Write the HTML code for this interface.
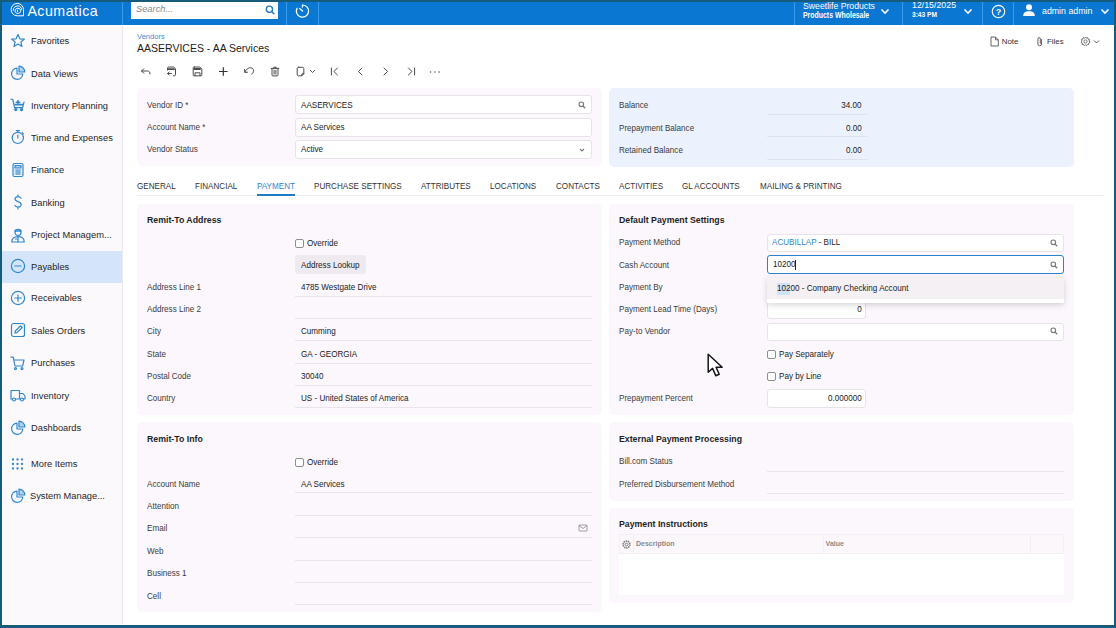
<!DOCTYPE html><html><head><meta charset="utf-8"><style>
html,body{margin:0;padding:0;width:1116px;height:628px;overflow:hidden;background:#fff}
body{position:relative;font-family:"Liberation Sans",sans-serif}
.t{position:absolute;white-space:nowrap}
.r{position:absolute;box-sizing:border-box}
svg.r{overflow:visible}
</style></head><body>
<div class="r" style="left:0px;top:0px;width:1116px;height:628px;background:#ffffff;"></div>
<div class="r" style="left:0px;top:2px;width:1116px;height:23px;background:#0a77d3;"></div>
<svg class="r" style="left:10px;top:2px;" width="15" height="16" viewBox="0 0 15 16"><g fill="none" stroke="#fff" stroke-width="1"><path d="M7.3 13.8 A6.2 6.2 0 1 1 13.5 7.6 L13.5 13.8 Z"/><path d="M3.2 8.8 C3.2 5.6 5.3 3.9 7.8 3.9 C10.3 3.9 11.6 5.8 11.6 7.8"/><path d="M5 9 C5 7.3 6.2 6.2 7.9 6.2 C9.5 6.2 10.7 7.3 10.7 8.8 C10.7 10.4 9.4 11.4 7.8 11.4 C6.4 11.4 5 10.6 5 9 Z"/><path d="M7.4 7.6 L7.6 10"/></g></svg>
<div class="t" style="left:27.4px;top:3.68px;font-size:14.2px;line-height:14.2px;color:#ffffff;font-weight:400;letter-spacing:0.5px;">Acumatica</div>
<div class="r" style="left:122px;top:2px;width:1px;height:23px;background:#3c9bef;"></div>
<div class="r" style="left:131px;top:2px;width:147px;height:17px;background:#ffffff;"></div>
<div class="t" style="left:136px;top:5.43px;font-size:9.3px;line-height:9.3px;color:#8a8a8a;font-weight:400;font-style:italic;">Search...</div>
<svg class="r" style="left:265px;top:5px;" width="11" height="11" viewBox="0 0 11 11"><g fill="none" stroke="#1f77c4" stroke-width="1.35"><circle cx="4.4" cy="4.2" r="3.1"/><path d="M6.6 6.4 L9.4 9.2"/></g></svg>
<div class="r" style="left:286px;top:2px;width:1px;height:23px;background:#3c9bef;"></div>
<svg class="r" style="left:294px;top:3px;" width="16" height="16" viewBox="0 0 16 16"><g fill="none" stroke="#fff" stroke-width="1.25" stroke-linecap="round"><path d="M3 5.4 A6.1 6.1 0 1 0 8.6 2 L8.4 4"/><path d="M5.6 5.4 L8.6 8"/></g></svg>
<div class="r" style="left:318px;top:2px;width:1px;height:23px;background:#3c9bef;"></div>
<div class="r" style="left:794px;top:2px;width:1px;height:23px;background:#3c9bef;"></div>
<div class="t" style="left:803px;top:1.84px;font-size:8.7px;line-height:8.7px;color:#ffffff;font-weight:400;">Sweetlife Products</div>
<div class="t" style="left:803px;top:11.27px;font-size:8.3px;line-height:8.3px;color:#ffffff;font-weight:700;transform:scaleX(0.835);transform-origin:left center;">Products Wholesale</div>
<svg class="r" style="left:880px;top:8px;" width="10" height="7" viewBox="0 0 10 7"><path d="M1.5 1.5 L5 5 L8.5 1.5" fill="none" stroke="#fff" stroke-width="1.6"/></svg>
<div class="r" style="left:902px;top:2px;width:1px;height:23px;background:#3c9bef;"></div>
<div class="t" style="left:912px;top:1.25px;font-size:8.8px;line-height:8.8px;color:#ffffff;font-weight:400;">12/15/2025</div>
<div class="t" style="left:912px;top:11.37px;font-size:7.6px;line-height:7.6px;color:#ffffff;font-weight:700;transform:scaleX(0.87);transform-origin:left center;">3:43 PM</div>
<svg class="r" style="left:963px;top:8px;" width="10" height="7" viewBox="0 0 10 7"><path d="M1.5 1.5 L5 5 L8.5 1.5" fill="none" stroke="#fff" stroke-width="1.6"/></svg>
<div class="r" style="left:982px;top:2px;width:1px;height:23px;background:#3c9bef;"></div>
<svg class="r" style="left:991px;top:4px;" width="15" height="15" viewBox="0 0 15 15"><circle cx="7.5" cy="7.5" r="6.2" fill="none" stroke="#fff" stroke-width="1.2"/><text x="7.5" y="10.8" text-anchor="middle" font-family="Liberation Sans" font-size="9" font-weight="700" fill="#fff">?</text></svg>
<div class="r" style="left:1013px;top:2px;width:1px;height:23px;background:#3c9bef;"></div>
<svg class="r" style="left:1022px;top:3px;" width="14" height="14" viewBox="0 0 14 14"><circle cx="7" cy="4.2" r="3" fill="#fff"/><path d="M1.2 13 C1.2 9.5 3.5 8.3 7 8.3 C10.5 8.3 12.8 9.5 12.8 13 Z" fill="#fff"/></svg>
<div class="t" style="left:1042px;top:6.55px;font-size:8.8px;line-height:8.8px;color:#ffffff;font-weight:400;">admin admin</div>
<svg class="r" style="left:1100px;top:8px;" width="10" height="7" viewBox="0 0 10 7"><path d="M1.5 1.5 L5 5 L8.5 1.5" fill="none" stroke="#fff" stroke-width="1.6"/></svg>
<div class="r" style="left:2px;top:25px;width:120px;height:599px;background:#fcf9fd;"></div>
<div class="r" style="left:122px;top:25px;width:1px;height:599px;background:#ece8ef;"></div>
<div class="r" style="left:2px;top:251px;width:120px;height:32px;background:#d4e5fa;"></div>
<div class="t" style="left:31px;top:36.29px;font-size:9.7px;line-height:9.7px;color:#262626;font-weight:400;transform:scaleX(0.96);transform-origin:left center;">Favorites</div>
<div class="t" style="left:31px;top:68.59px;font-size:9.7px;line-height:9.7px;color:#262626;font-weight:400;transform:scaleX(0.96);transform-origin:left center;">Data Views</div>
<div class="t" style="left:31px;top:100.69px;font-size:9.7px;line-height:9.7px;color:#262626;font-weight:400;transform:scaleX(0.96);transform-origin:left center;">Inventory Planning</div>
<div class="t" style="left:31px;top:132.69px;font-size:9.7px;line-height:9.7px;color:#262626;font-weight:400;transform:scaleX(0.96);transform-origin:left center;">Time and Expenses</div>
<div class="t" style="left:31px;top:165.29px;font-size:9.7px;line-height:9.7px;color:#262626;font-weight:400;transform:scaleX(0.96);transform-origin:left center;">Finance</div>
<div class="t" style="left:31px;top:197.59px;font-size:9.7px;line-height:9.7px;color:#262626;font-weight:400;transform:scaleX(0.96);transform-origin:left center;">Banking</div>
<div class="t" style="left:31px;top:229.99px;font-size:9.7px;line-height:9.7px;color:#262626;font-weight:400;transform:scaleX(0.96);transform-origin:left center;">Project Managem...</div>
<div class="t" style="left:31px;top:261.69px;font-size:9.7px;line-height:9.7px;color:#262626;font-weight:400;transform:scaleX(0.96);transform-origin:left center;">Payables</div>
<div class="t" style="left:31px;top:293.49px;font-size:9.7px;line-height:9.7px;color:#262626;font-weight:400;transform:scaleX(0.96);transform-origin:left center;">Receivables</div>
<div class="t" style="left:31px;top:325.79px;font-size:9.7px;line-height:9.7px;color:#262626;font-weight:400;transform:scaleX(0.96);transform-origin:left center;">Sales Orders</div>
<div class="t" style="left:31px;top:358.09px;font-size:9.7px;line-height:9.7px;color:#262626;font-weight:400;transform:scaleX(0.96);transform-origin:left center;">Purchases</div>
<div class="t" style="left:31px;top:390.69px;font-size:9.7px;line-height:9.7px;color:#262626;font-weight:400;transform:scaleX(0.96);transform-origin:left center;">Inventory</div>
<div class="t" style="left:31px;top:423.39px;font-size:9.7px;line-height:9.7px;color:#262626;font-weight:400;transform:scaleX(0.96);transform-origin:left center;">Dashboards</div>
<div class="t" style="left:31px;top:458.89px;font-size:9.7px;line-height:9.7px;color:#262626;font-weight:400;transform:scaleX(0.96);transform-origin:left center;">More Items</div>
<div class="t" style="left:30px;top:491.29px;font-size:9.7px;line-height:9.7px;color:#262626;font-weight:400;transform:scaleX(0.96);transform-origin:left center;">System Manage...</div>
<svg class="r" style="left:10px;top:33px;" width="16" height="16" viewBox="0 0 16 16"><path fill="none" stroke="#2f88cf" stroke-width="1.2" stroke-linejoin="round" stroke-linecap="round" d="M8 1.5 L9.9 5.8 L14.4 6.1 L10.9 9 L12 13.6 L8 11.1 L4 13.6 L5.1 9 L1.6 6.1 L6.1 5.8 Z"/></svg>
<svg class="r" style="left:10px;top:65px;" width="16" height="16" viewBox="0 0 16 16"><g fill="none" stroke="#2f88cf" stroke-width="1.2" stroke-linejoin="round" stroke-linecap="round"><path d="M7 3.2 A5.6 5.6 0 1 0 12.8 9 L7 9 Z"/><path d="M9 1.2 L9 7 L14.8 7 A5.8 5.8 0 0 0 9 1.2 Z" fill="#2f88cf" fill-opacity="0.35"/></g></svg>
<svg class="r" style="left:10px;top:98px;" width="16" height="16" viewBox="0 0 16 16"><g fill="none" stroke="#2f88cf" stroke-width="1.2" stroke-linejoin="round" stroke-linecap="round"><path d="M1 1.2 L2.8 1.5 L4.6 9.6 L12.6 9.6 L14 4.2"/><path d="M5 6.6 H12.8" stroke-width="1.6"/><circle cx="5.8" cy="11.6" r="1.1" fill="#2f88cf"/><circle cx="11.6" cy="11.6" r="1.1" fill="#2f88cf"/><path d="M8 2.4 V6 M6.2 4.2 H9.8" stroke-width="1.5"/></g></svg>
<svg class="r" style="left:10px;top:129px;" width="16" height="16" viewBox="0 0 16 16"><g fill="none" stroke="#2f88cf" stroke-width="1.2" stroke-linejoin="round" stroke-linecap="round"><circle cx="7.8" cy="8.9" r="5.6"/><path d="M6.2 1.6 H9.4 M7.8 1.6 V3.3 M7.8 6 V9 M12.2 3.6 L13.4 4.8"/></g></svg>
<svg class="r" style="left:10px;top:162px;" width="16" height="16" viewBox="0 0 16 16"><g fill="none" stroke="#2f88cf" stroke-width="1.2" stroke-linejoin="round" stroke-linecap="round"><rect x="3" y="1.5" width="10" height="13" rx="1.5"/><rect x="5" y="3.5" width="6" height="2.5" fill="#2f88cf" fill-opacity="0.4"/><path d="M5 8 H11 M5 10 H11 M5 12 H11 M7 8 V12.5 M9 8 V12.5" stroke-width="0.8"/></g></svg>
<svg class="r" style="left:10px;top:194px;" width="16" height="16" viewBox="0 0 16 16"><path fill="none" stroke="#2f88cf" stroke-width="1.2" stroke-linejoin="round" stroke-linecap="round" stroke-width="1.4" d="M11 4.2 C10.3 3 9.3 2.6 8 2.6 C6.2 2.6 5 3.5 5 5 C5 8.2 11.2 7 11.2 10.6 C11.2 12.2 9.9 13.1 8 13.1 C6.5 13.1 5.4 12.5 4.8 11.3 M8 0.8 V2.6 M8 13.1 V15"/></svg>
<svg class="r" style="left:10px;top:227px;" width="16" height="16" viewBox="0 0 16 16"><g fill="none" stroke="#2f88cf" stroke-width="1.2" stroke-linejoin="round" stroke-linecap="round"><circle cx="8" cy="5.5" r="3"/><path d="M4.8 4.2 C5 1.6 11 1.6 11.2 4.2 Z" fill="#2f88cf" fill-opacity="0.4"/><path d="M1.8 15 C1.8 11 4.5 9.6 8 9.6 C11.5 9.6 14.2 11 14.2 15 Z"/><path d="M8 9.6 V15 M5.5 12 H7"/></g></svg>
<svg class="r" style="left:10px;top:258px;" width="16" height="16" viewBox="0 0 16 16"><g fill="none" stroke="#2f88cf" stroke-width="1.2" stroke-linejoin="round" stroke-linecap="round"><circle cx="8" cy="8" r="6.6"/><path d="M4.8 8 H11.2"/></g></svg>
<svg class="r" style="left:10px;top:290px;" width="16" height="16" viewBox="0 0 16 16"><g fill="none" stroke="#2f88cf" stroke-width="1.2" stroke-linejoin="round" stroke-linecap="round"><circle cx="8" cy="8" r="6.6"/><path d="M4.8 8 H11.2 M8 4.8 V11.2"/></g></svg>
<svg class="r" style="left:10px;top:322px;" width="16" height="16" viewBox="0 0 16 16"><g fill="none" stroke="#2f88cf" stroke-width="1.2" stroke-linejoin="round" stroke-linecap="round"><rect x="1.5" y="1.5" width="13" height="13" rx="2"/><path d="M5 11 L5.3 9 L10.5 3.8 L12.2 5.5 L7 10.7 Z"/></g></svg>
<svg class="r" style="left:10px;top:355px;" width="16" height="16" viewBox="0 0 16 16"><g fill="none" stroke="#2f88cf" stroke-width="1.2" stroke-linejoin="round" stroke-linecap="round" stroke-width="1.3"><path d="M1 2.2 L3.2 2.2 L5 11 L12.6 11 L14 5 L4 5"/><circle cx="5.5" cy="13.6" r="1"/><circle cx="12" cy="13.6" r="1"/></g></svg>
<svg class="r" style="left:10px;top:387px;" width="16" height="16" viewBox="0 0 16 16"><g fill="none" stroke="#2f88cf" stroke-width="1.2" stroke-linejoin="round" stroke-linecap="round" stroke-width="1.2"><path d="M1 3.5 H9.5 V12 H1 Z M9.5 6.5 H13 L15 9 V12 H9.5"/><circle cx="4" cy="12.5" r="1.5" fill="#fcf9fd"/><circle cx="12" cy="12.5" r="1.5" fill="#fcf9fd"/></g></svg>
<svg class="r" style="left:10px;top:420px;" width="16" height="16" viewBox="0 0 16 16"><g fill="none" stroke="#2f88cf" stroke-width="1.2" stroke-linejoin="round" stroke-linecap="round"><path d="M7 3.2 A5.6 5.6 0 1 0 12.8 9 L7 9 Z"/><path d="M9 1.2 L9 7 L14.8 7 A5.8 5.8 0 0 0 9 1.2 Z" fill="#2f88cf" fill-opacity="0.35"/></g></svg>
<svg class="r" style="left:10px;top:456px;" width="16" height="16" viewBox="0 0 16 16"><circle cx="3.0" cy="3.5" r="1.15" fill="#2f88cf"/><circle cx="3.0" cy="8.0" r="1.15" fill="#2f88cf"/><circle cx="3.0" cy="12.5" r="1.15" fill="#2f88cf"/><circle cx="7.5" cy="3.5" r="1.15" fill="#2f88cf"/><circle cx="7.5" cy="8.0" r="1.15" fill="#2f88cf"/><circle cx="7.5" cy="12.5" r="1.15" fill="#2f88cf"/><circle cx="12.0" cy="3.5" r="1.15" fill="#2f88cf"/><circle cx="12.0" cy="8.0" r="1.15" fill="#2f88cf"/><circle cx="12.0" cy="12.5" r="1.15" fill="#2f88cf"/></svg>
<svg class="r" style="left:10px;top:488px;" width="16" height="16" viewBox="0 0 16 16"><g fill="none" stroke="#2f88cf" stroke-width="1.2" stroke-linejoin="round" stroke-linecap="round"><path d="M7 3.2 A5.6 5.6 0 1 0 12.8 9 L7 9 Z"/><path d="M9 1.2 L9 7 L14.8 7 A5.8 5.8 0 0 0 9 1.2 Z" fill="#2f88cf" fill-opacity="0.35"/></g></svg>
<div class="t" style="left:137px;top:32.87px;font-size:7.6px;line-height:7.6px;color:#3f8fd2;font-weight:400;">Vendors</div>
<div class="t" style="left:137px;top:43.11px;font-size:10.5px;line-height:10.5px;color:#222222;font-weight:400;">AASERVICES - AA Services</div>
<svg class="r" style="left:989px;top:36px;" width="11" height="11" viewBox="0 0 11 11"><path d="M2 1 L6.5 1 L9.3 3.8 L9.3 10 L2 10 Z M6.5 1 L6.5 3.8 L9.3 3.8" fill="none" stroke="#555" stroke-width="0.9" stroke-linejoin="round"/></svg>
<div class="t" style="left:1001.7px;top:37.81px;font-size:7.9px;line-height:7.9px;color:#333;font-weight:400;">Note</div>
<svg class="r" style="left:1035px;top:36px;" width="10" height="11" viewBox="0 0 10 11"><path d="M6.5 3.5 L6.5 8 A1.8 1.8 0 0 1 2.9 8 L2.9 2.8 A1.2 1.2 0 0 1 5.3 2.8 L5.3 7.5" fill="none" stroke="#555" stroke-width="0.9" stroke-linecap="round"/></svg>
<div class="t" style="left:1047px;top:37.81px;font-size:7.9px;line-height:7.9px;color:#333;font-weight:400;">Files</div>
<svg class="r" style="left:1080px;top:36px;" width="11" height="11" viewBox="0 0 11 11"><g fill="none" stroke="#666" stroke-width="0.9"><circle cx="5.5" cy="5.5" r="1.6"/><path d="M5.5 1 L6.4 2.2 L7.9 1.7 L8.1 3.2 L9.6 3.6 L9 5 L10 6.2 L8.7 7 L8.8 8.5 L7.3 8.5 L6.5 9.8 L5.5 8.9 L4.3 9.8 L3.6 8.5 L2.1 8.5 L2.3 7 L1 6.2 L2 5 L1.4 3.6 L2.9 3.2 L3.1 1.7 L4.6 2.2 Z" stroke-linejoin="round"/></g></svg>
<svg class="r" style="left:1093px;top:39px;" width="7" height="6" viewBox="0 0 7 6"><path d="M1 1.5 L3.5 4 L6 1.5" fill="none" stroke="#555" stroke-width="1"/></svg>
<svg class="r" style="left:140px;top:66px;" width="12" height="10" viewBox="0 0 12 10"><g fill="none" stroke="#4a4a4a" stroke-width="1" stroke-linecap="round" stroke-linejoin="round"><path d="M1.5 5 H7.5 C9.3 5 10 6 10 8"/><path d="M3.8 2.7 L1.5 5 L3.8 7.3"/></g></svg>
<svg class="r" style="left:166px;top:66px;" width="11" height="11" viewBox="0 0 11 11"><g fill="none" stroke="#4a4a4a" stroke-width="1" stroke-linecap="round" stroke-linejoin="round"><path d="M1.5 4 V2.2 C1.5 1.5 2 1 2.7 1 H7.8 L9.5 2.7 V8.8 C9.5 9.4 9 9.8 8.4 9.8 H7.5"/><path d="M2 3.2 H8" stroke-width="1.8"/><path d="M5.5 7.5 H1.6 M3.2 6 L1.6 7.5 L3.2 9"/></g></svg>
<svg class="r" style="left:192px;top:66px;" width="11" height="11" viewBox="0 0 11 11"><g fill="none" stroke="#4a4a4a" stroke-width="1" stroke-linecap="round" stroke-linejoin="round"><path d="M2.2 1 H7.8 L9.8 3 V8.8 C9.8 9.4 9.4 9.8 8.8 9.8 H2.2 C1.6 9.8 1.2 9.4 1.2 8.8 V2 C1.2 1.4 1.6 1 2.2 1 Z"/><path d="M2.4 3 H8" stroke-width="1.8"/><path d="M3 9.8 V6.8 H8 V9.8"/></g></svg>
<svg class="r" style="left:218px;top:66px;" width="11" height="11" viewBox="0 0 11 11"><path d="M5.3 1.2 V9.8 M1 5.5 H9.6" stroke="#333" stroke-width="1.2"/></svg>
<svg class="r" style="left:243px;top:66px;" width="12" height="10" viewBox="0 0 12 10"><g fill="none" stroke="#4a4a4a" stroke-width="1" stroke-linecap="round" stroke-linejoin="round"><path d="M2 6 C3.5 2.5 6 1.5 8 1.8 C10 2.2 10.8 3.8 10.6 5.4 C10.4 6.6 9.6 7.4 8.6 8"/><path d="M1.6 3.4 L1.8 6.4 L4.6 6.2"/></g></svg>
<svg class="r" style="left:270px;top:66px;" width="10" height="11" viewBox="0 0 10 11"><g fill="none" stroke="#4a4a4a" stroke-width="1" stroke-linecap="round" stroke-linejoin="round"><path d="M1.2 2.4 H8.8 M3.8 2.3 V1.2 H6.2 V2.3 M2 2.6 V8.9 C2 9.5 2.4 9.9 3 9.9 H7 C7.6 9.9 8 9.5 8 8.9 V2.6 M4.1 4.2 V8.1 M5.9 4.2 V8.1"/></g></svg>
<svg class="r" style="left:296px;top:66px;" width="9" height="11" viewBox="0 0 9 11"><g fill="none" stroke="#4a4a4a" stroke-width="1" stroke-linecap="round" stroke-linejoin="round"><path d="M2.4 1.3 H6.6 C7.3 1.3 7.8 1.8 7.8 2.5 V7.8 L5.8 9.8 H2.4 C1.7 9.8 1.2 9.3 1.2 8.6 V2.5 C1.2 1.8 1.7 1.3 2.4 1.3 Z"/><path d="M5.8 9.6 V8 C5.8 7.9 5.9 7.8 6 7.8 H7.8"/></g></svg>
<svg class="r" style="left:309px;top:69px;" width="7" height="5" viewBox="0 0 7 5"><path d="M1 1 L3.5 3.5 L6 1" fill="none" stroke="#555" stroke-width="1"/></svg>
<svg class="r" style="left:330px;top:67px;" width="9" height="9" viewBox="0 0 9 9"><g fill="none" stroke="#4a4a4a" stroke-width="1" stroke-linecap="round" stroke-linejoin="round" stroke-width="1.15"><path d="M1.4 1 V8 M7.4 1 L3.9 4.5 L7.4 8"/></g></svg>
<svg class="r" style="left:356px;top:67px;" width="8" height="9" viewBox="0 0 8 9"><g fill="none" stroke="#4a4a4a" stroke-width="1" stroke-linecap="round" stroke-linejoin="round" stroke-width="1.15"><path d="M6 1 L2.5 4.5 L6 8"/></g></svg>
<svg class="r" style="left:382px;top:67px;" width="8" height="9" viewBox="0 0 8 9"><g fill="none" stroke="#4a4a4a" stroke-width="1" stroke-linecap="round" stroke-linejoin="round" stroke-width="1.15"><path d="M2 1 L5.5 4.5 L2 8"/></g></svg>
<svg class="r" style="left:407px;top:67px;" width="9" height="9" viewBox="0 0 9 9"><g fill="none" stroke="#4a4a4a" stroke-width="1" stroke-linecap="round" stroke-linejoin="round" stroke-width="1.15"><path d="M1.4 1 L4.9 4.5 L1.4 8 M7.6 1 V8"/></g></svg>
<svg class="r" style="left:429px;top:70px;" width="12" height="4" viewBox="0 0 12 4"><circle cx="1.5" cy="2" r="0.8" fill="#555"/><circle cx="5.8" cy="2" r="0.8" fill="#555"/><circle cx="10.1" cy="2" r="0.8" fill="#555"/></svg>
<div class="r" style="left:137px;top:88px;width:465px;height:78px;background:#fbf7fc;border-radius:5px;"></div>
<div class="t" style="left:147px;top:100.72px;font-size:8.6px;line-height:8.6px;color:#3b3b3b;font-weight:400;transform:scaleX(0.942);transform-origin:left center;">Vendor ID *</div>
<div class="r" style="left:295px;top:95px;width:297px;height:19px;background:#ffffff;border:1px solid #e7e3e9;border-radius:3px;"></div>
<div class="t" style="left:147px;top:123.12px;font-size:8.6px;line-height:8.6px;color:#3b3b3b;font-weight:400;transform:scaleX(0.942);transform-origin:left center;">Account Name *</div>
<div class="r" style="left:295px;top:117.5px;width:297px;height:19px;background:#ffffff;border:1px solid #e7e3e9;border-radius:3px;"></div>
<div class="t" style="left:147px;top:145.12px;font-size:8.6px;line-height:8.6px;color:#3b3b3b;font-weight:400;transform:scaleX(0.942);transform-origin:left center;">Vendor Status</div>
<div class="r" style="left:295px;top:140px;width:297px;height:19px;background:#ffffff;border:1px solid #e7e3e9;border-radius:3px;"></div>
<div class="t" style="left:300.5px;top:100.72px;font-size:8.6px;line-height:8.6px;color:#222222;font-weight:400;transform:scaleX(0.942);transform-origin:left center;">AASERVICES</div>
<div class="t" style="left:300.5px;top:123.12px;font-size:8.6px;line-height:8.6px;color:#222222;font-weight:400;transform:scaleX(0.942);transform-origin:left center;">AA Services</div>
<div class="t" style="left:300.5px;top:145.12px;font-size:8.6px;line-height:8.6px;color:#222222;font-weight:400;transform:scaleX(0.942);transform-origin:left center;">Active</div>
<svg class="r" style="left:578px;top:100.5px;" width="8" height="8" viewBox="0 0 8 8"><g fill="none" stroke="#7a7a7a" stroke-width="1.1"><circle cx="3.3" cy="3.3" r="2.3"/><path d="M5 5 L7.2 7.2" stroke-width="1.3"/></g></svg>
<svg class="r" style="left:579px;top:147.5px;" width="6" height="5" viewBox="0 0 6 5"><path d="M1 1 L3 3 L5 1" fill="none" stroke="#7a7a7a" stroke-width="1.1"/></svg>
<div class="r" style="left:609px;top:88px;width:465px;height:78.5px;background:#ecf2fd;border-radius:5px;"></div>
<div class="t" style="left:618.5px;top:101.12px;font-size:8.6px;line-height:8.6px;color:#3b3b3b;font-weight:400;transform:scaleX(0.942);transform-origin:left center;">Balance</div>
<div class="t" style="right:254.29999999999995px;top:101.12px;font-size:8.6px;line-height:8.6px;color:#222222;font-weight:400;transform:scaleX(0.942);transform-origin:right center;">34.00</div>
<div class="r" style="left:767px;top:113.7px;width:100px;height:1px;background:#dde3ec;"></div>
<div class="t" style="left:618.5px;top:123.52px;font-size:8.6px;line-height:8.6px;color:#3b3b3b;font-weight:400;transform:scaleX(0.942);transform-origin:left center;">Prepayment Balance</div>
<div class="t" style="right:254.29999999999995px;top:123.52px;font-size:8.6px;line-height:8.6px;color:#222222;font-weight:400;transform:scaleX(0.942);transform-origin:right center;">0.00</div>
<div class="r" style="left:767px;top:136.4px;width:100px;height:1px;background:#dde3ec;"></div>
<div class="t" style="left:618.5px;top:145.72px;font-size:8.6px;line-height:8.6px;color:#3b3b3b;font-weight:400;transform:scaleX(0.942);transform-origin:left center;">Retained Balance</div>
<div class="t" style="right:254.29999999999995px;top:145.72px;font-size:8.6px;line-height:8.6px;color:#222222;font-weight:400;transform:scaleX(0.942);transform-origin:right center;">0.00</div>
<div class="r" style="left:767px;top:158.6px;width:100px;height:1px;background:#dde3ec;"></div>
<div class="t" style="left:137.3px;top:182.42px;font-size:8.6px;line-height:8.6px;color:#333333;font-weight:400;transform:scaleX(0.942);transform-origin:left center;">GENERAL</div>
<div class="t" style="left:195px;top:182.42px;font-size:8.6px;line-height:8.6px;color:#333333;font-weight:400;transform:scaleX(0.942);transform-origin:left center;">FINANCIAL</div>
<div class="t" style="left:256.6px;top:182.42px;font-size:8.6px;line-height:8.6px;color:#2f86cc;font-weight:400;transform:scaleX(0.942);transform-origin:left center;">PAYMENT</div>
<div class="t" style="left:313.7px;top:182.42px;font-size:8.6px;line-height:8.6px;color:#333333;font-weight:400;transform:scaleX(0.942);transform-origin:left center;">PURCHASE SETTINGS</div>
<div class="t" style="left:421.2px;top:182.42px;font-size:8.6px;line-height:8.6px;color:#333333;font-weight:400;transform:scaleX(0.942);transform-origin:left center;">ATTRIBUTES</div>
<div class="t" style="left:490px;top:182.42px;font-size:8.6px;line-height:8.6px;color:#333333;font-weight:400;transform:scaleX(0.942);transform-origin:left center;">LOCATIONS</div>
<div class="t" style="left:555.8px;top:182.42px;font-size:8.6px;line-height:8.6px;color:#333333;font-weight:400;transform:scaleX(0.942);transform-origin:left center;">CONTACTS</div>
<div class="t" style="left:618.5px;top:182.42px;font-size:8.6px;line-height:8.6px;color:#333333;font-weight:400;transform:scaleX(0.942);transform-origin:left center;">ACTIVITIES</div>
<div class="t" style="left:682.3px;top:182.42px;font-size:8.6px;line-height:8.6px;color:#333333;font-weight:400;transform:scaleX(0.942);transform-origin:left center;">GL ACCOUNTS</div>
<div class="t" style="left:759.5px;top:182.42px;font-size:8.6px;line-height:8.6px;color:#333333;font-weight:400;transform:scaleX(0.942);transform-origin:left center;">MAILING &amp; PRINTING</div>
<div class="r" style="left:137px;top:195px;width:967px;height:1px;background:#f0edf1;"></div>
<div class="r" style="left:256.5px;top:194px;width:38px;height:2px;background:#1f7bc6;"></div>
<div class="r" style="left:137px;top:204px;width:465px;height:211px;background:#fbf7fc;border-radius:5px;"></div>
<div class="t" style="left:147px;top:215.79px;font-size:8.75px;line-height:8.75px;color:#1f1f1f;font-weight:700;">Remit-To Address</div>
<div class="r" style="left:295.0px;top:238.7px;width:9px;height:9px;background:#ffffff;border:1px solid #8e8e8e;border-radius:2px;"></div>
<div class="t" style="left:307.2px;top:238.72px;font-size:8.6px;line-height:8.6px;color:#222222;font-weight:400;transform:scaleX(0.942);transform-origin:left center;">Override</div>
<div class="r" style="left:295px;top:255px;width:70.5px;height:19px;background:#eeeaef;border-radius:3px;"></div>
<div class="t" style="left:300.5px;top:260.52px;font-size:8.6px;line-height:8.6px;color:#222222;font-weight:400;transform:scaleX(0.942);transform-origin:left center;">Address Lookup</div>
<div class="t" style="left:147px;top:283.02px;font-size:8.6px;line-height:8.6px;color:#3b3b3b;font-weight:400;transform:scaleX(0.942);transform-origin:left center;">Address Line 1</div>
<div class="t" style="left:300.5px;top:283.02px;font-size:8.6px;line-height:8.6px;color:#222222;font-weight:400;transform:scaleX(0.942);transform-origin:left center;">4785 Westgate Drive</div>
<div class="r" style="left:295px;top:295.90000000000003px;width:297px;height:1px;background:#e8e4ea;"></div>
<div class="t" style="left:147px;top:305.22px;font-size:8.6px;line-height:8.6px;color:#3b3b3b;font-weight:400;transform:scaleX(0.942);transform-origin:left center;">Address Line 2</div>
<div class="r" style="left:295px;top:318.1px;width:297px;height:1px;background:#e8e4ea;"></div>
<div class="t" style="left:147px;top:327.42px;font-size:8.6px;line-height:8.6px;color:#3b3b3b;font-weight:400;transform:scaleX(0.942);transform-origin:left center;">City</div>
<div class="t" style="left:300.5px;top:327.42px;font-size:8.6px;line-height:8.6px;color:#222222;font-weight:400;transform:scaleX(0.942);transform-origin:left center;">Cumming</div>
<div class="r" style="left:295px;top:340.3px;width:297px;height:1px;background:#e8e4ea;"></div>
<div class="t" style="left:147px;top:349.62px;font-size:8.6px;line-height:8.6px;color:#3b3b3b;font-weight:400;transform:scaleX(0.942);transform-origin:left center;">State</div>
<div class="t" style="left:300.5px;top:349.62px;font-size:8.6px;line-height:8.6px;color:#222222;font-weight:400;transform:scaleX(0.942);transform-origin:left center;">GA - GEORGIA</div>
<div class="r" style="left:295px;top:362.5px;width:297px;height:1px;background:#e8e4ea;"></div>
<div class="t" style="left:147px;top:371.82px;font-size:8.6px;line-height:8.6px;color:#3b3b3b;font-weight:400;transform:scaleX(0.942);transform-origin:left center;">Postal Code</div>
<div class="t" style="left:300.5px;top:371.82px;font-size:8.6px;line-height:8.6px;color:#222222;font-weight:400;transform:scaleX(0.942);transform-origin:left center;">30040</div>
<div class="r" style="left:295px;top:384.70000000000005px;width:297px;height:1px;background:#e8e4ea;"></div>
<div class="t" style="left:147px;top:394.02px;font-size:8.6px;line-height:8.6px;color:#3b3b3b;font-weight:400;transform:scaleX(0.942);transform-origin:left center;">Country</div>
<div class="t" style="left:300.5px;top:394.02px;font-size:8.6px;line-height:8.6px;color:#222222;font-weight:400;transform:scaleX(0.942);transform-origin:left center;">US - United States of America</div>
<div class="r" style="left:295px;top:406.90000000000003px;width:297px;height:1px;background:#e8e4ea;"></div>
<div class="r" style="left:609px;top:204px;width:465px;height:211px;background:#fbf7fc;border-radius:5px;"></div>
<div class="t" style="left:619px;top:215.79px;font-size:8.75px;line-height:8.75px;color:#1f1f1f;font-weight:700;">Default Payment Settings</div>
<div class="t" style="left:619px;top:238.32px;font-size:8.6px;line-height:8.6px;color:#3b3b3b;font-weight:400;transform:scaleX(0.942);transform-origin:left center;">Payment Method</div>
<div class="t" style="left:619px;top:260.52px;font-size:8.6px;line-height:8.6px;color:#3b3b3b;font-weight:400;transform:scaleX(0.942);transform-origin:left center;">Cash Account</div>
<div class="t" style="left:619px;top:282.72px;font-size:8.6px;line-height:8.6px;color:#3b3b3b;font-weight:400;transform:scaleX(0.942);transform-origin:left center;">Payment By</div>
<div class="t" style="left:619px;top:304.92px;font-size:8.6px;line-height:8.6px;color:#3b3b3b;font-weight:400;transform:scaleX(0.942);transform-origin:left center;">Payment Lead Time (Days)</div>
<div class="t" style="left:619px;top:327.02px;font-size:8.6px;line-height:8.6px;color:#3b3b3b;font-weight:400;transform:scaleX(0.942);transform-origin:left center;">Pay-to Vendor</div>
<div class="t" style="left:619px;top:394.02px;font-size:8.6px;line-height:8.6px;color:#3b3b3b;font-weight:400;transform:scaleX(0.942);transform-origin:left center;">Prepayment Percent</div>
<div class="r" style="left:767px;top:233.8px;width:297px;height:18px;background:#ffffff;border:1px solid #e7e3e9;border-radius:3px;"></div>
<div class="t" style="left:772.4px;top:238.12px;font-size:8.6px;line-height:8.6px;color:#222222;font-weight:400;transform:scaleX(0.942);transform-origin:left center;"><span style="color:#3586ca">ACUBILLAP</span> - BILL</div>
<svg class="r" style="left:1050px;top:238.6px;" width="8" height="8" viewBox="0 0 8 8"><g fill="none" stroke="#7a7a7a" stroke-width="1.1"><circle cx="3.3" cy="3.3" r="2.3"/><path d="M5 5 L7.2 7.2" stroke-width="1.3"/></g></svg>
<div class="r" style="left:767px;top:255.2px;width:297px;height:19px;background:#ffffff;border:1px solid #e7e3e9;border-radius:3px;border:1.5px solid #2b80d0;"></div>
<div class="t" style="left:772.7px;top:260.02px;font-size:8.6px;line-height:8.6px;color:#222222;font-weight:400;transform:scaleX(0.942);transform-origin:left center;">10200</div>
<div class="r" style="left:794.5px;top:260px;width:1px;height:10px;background:#222;"></div>
<svg class="r" style="left:1050px;top:260.8px;" width="8" height="8" viewBox="0 0 8 8"><g fill="none" stroke="#7a7a7a" stroke-width="1.1"><circle cx="3.3" cy="3.3" r="2.3"/><path d="M5 5 L7.2 7.2" stroke-width="1.3"/></g></svg>
<div class="r" style="left:767px;top:300px;width:99px;height:18.5px;background:#ffffff;border:1px solid #e7e3e9;border-radius:3px;"></div>
<div class="t" style="right:254.39999999999998px;top:305.12px;font-size:8.6px;line-height:8.6px;color:#222222;font-weight:400;transform:scaleX(0.942);transform-origin:right center;">0</div>
<div class="r" style="left:767px;top:277.2px;width:297px;height:25.5px;background:#ffffff;box-shadow:0 2px 6px rgba(0,0,0,0.16);"></div>
<div class="r" style="left:767px;top:277.2px;width:297px;height:22px;background:#f4f0f4;"></div>
<div class="r" style="left:776.5px;top:282.5px;width:13.5px;height:12px;background:#cfe3f8;"></div>
<div class="t" style="left:776.9px;top:284.22px;font-size:8.6px;line-height:8.6px;color:#222222;font-weight:400;transform:scaleX(0.942);transform-origin:left center;">10200 - Company Checking Account</div>
<div class="r" style="left:767px;top:323.2px;width:297px;height:18px;background:#ffffff;border:1px solid #e7e3e9;border-radius:3px;"></div>
<svg class="r" style="left:1050px;top:327.3px;" width="8" height="8" viewBox="0 0 8 8"><g fill="none" stroke="#7a7a7a" stroke-width="1.1"><circle cx="3.3" cy="3.3" r="2.3"/><path d="M5 5 L7.2 7.2" stroke-width="1.3"/></g></svg>
<div class="r" style="left:767.0px;top:349.7px;width:9px;height:9px;background:#ffffff;border:1px solid #8e8e8e;border-radius:2px;"></div>
<div class="t" style="left:779.4px;top:349.72px;font-size:8.6px;line-height:8.6px;color:#222222;font-weight:400;transform:scaleX(0.942);transform-origin:left center;">Pay Separately</div>
<div class="r" style="left:767.0px;top:372.0px;width:9px;height:9px;background:#ffffff;border:1px solid #8e8e8e;border-radius:2px;"></div>
<div class="t" style="left:779.4px;top:372.02px;font-size:8.6px;line-height:8.6px;color:#222222;font-weight:400;transform:scaleX(0.942);transform-origin:left center;">Pay by Line</div>
<div class="r" style="left:767px;top:389.2px;width:99px;height:18.5px;background:#ffffff;border:1px solid #e7e3e9;border-radius:3px;"></div>
<div class="t" style="right:254.39999999999998px;top:394.22px;font-size:8.6px;line-height:8.6px;color:#222222;font-weight:400;transform:scaleX(0.942);transform-origin:right center;">0.000000</div>
<div class="r" style="left:137px;top:422px;width:465px;height:190px;background:#fbf7fc;border-radius:5px;"></div>
<div class="t" style="left:147px;top:434.89px;font-size:8.75px;line-height:8.75px;color:#1f1f1f;font-weight:700;">Remit-To Info</div>
<div class="r" style="left:295.0px;top:457.59999999999997px;width:9px;height:9px;background:#ffffff;border:1px solid #8e8e8e;border-radius:2px;"></div>
<div class="t" style="left:307.2px;top:457.62px;font-size:8.6px;line-height:8.6px;color:#222222;font-weight:400;transform:scaleX(0.942);transform-origin:left center;">Override</div>
<div class="t" style="left:147px;top:479.52px;font-size:8.6px;line-height:8.6px;color:#3b3b3b;font-weight:400;transform:scaleX(0.942);transform-origin:left center;">Account Name</div>
<div class="t" style="left:300.5px;top:479.52px;font-size:8.6px;line-height:8.6px;color:#222222;font-weight:400;transform:scaleX(0.942);transform-origin:left center;">AA Services</div>
<div class="r" style="left:295px;top:492.40000000000003px;width:297px;height:1px;background:#e8e4ea;"></div>
<div class="t" style="left:147px;top:501.92px;font-size:8.6px;line-height:8.6px;color:#3b3b3b;font-weight:400;transform:scaleX(0.942);transform-origin:left center;">Attention</div>
<div class="r" style="left:295px;top:514.8px;width:297px;height:1px;background:#e8e4ea;"></div>
<div class="t" style="left:147px;top:524.32px;font-size:8.6px;line-height:8.6px;color:#3b3b3b;font-weight:400;transform:scaleX(0.942);transform-origin:left center;">Email</div>
<div class="r" style="left:295px;top:537.2px;width:297px;height:1px;background:#e8e4ea;"></div>
<div class="t" style="left:147px;top:546.72px;font-size:8.6px;line-height:8.6px;color:#3b3b3b;font-weight:400;transform:scaleX(0.942);transform-origin:left center;">Web</div>
<div class="r" style="left:295px;top:559.6px;width:297px;height:1px;background:#e8e4ea;"></div>
<div class="t" style="left:147px;top:569.12px;font-size:8.6px;line-height:8.6px;color:#3b3b3b;font-weight:400;transform:scaleX(0.942);transform-origin:left center;">Business 1</div>
<div class="r" style="left:295px;top:582.0px;width:297px;height:1px;background:#e8e4ea;"></div>
<div class="t" style="left:147px;top:591.52px;font-size:8.6px;line-height:8.6px;color:#3b3b3b;font-weight:400;transform:scaleX(0.942);transform-origin:left center;">Cell</div>
<div class="r" style="left:295px;top:604.4px;width:297px;height:1px;background:#e8e4ea;"></div>
<svg class="r" style="left:578px;top:524px;" width="10" height="8" viewBox="0 0 10 8"><g fill="none" stroke="#888" stroke-width="0.8"><rect x="1" y="1" width="8" height="6" rx="0.5"/><path d="M1 1.5 L5 4.5 L9 1.5"/></g></svg>
<div class="r" style="left:609px;top:422px;width:465px;height:78.5px;background:#fbf7fc;border-radius:5px;"></div>
<div class="t" style="left:619px;top:434.79px;font-size:8.75px;line-height:8.75px;color:#1f1f1f;font-weight:700;">External Payment Processing</div>
<div class="t" style="left:619px;top:457.42px;font-size:8.6px;line-height:8.6px;color:#3b3b3b;font-weight:400;transform:scaleX(0.942);transform-origin:left center;">Bill.com Status</div>
<div class="r" style="left:767px;top:470.5px;width:297px;height:1px;background:#e8e4ea;"></div>
<div class="t" style="left:619px;top:479.62px;font-size:8.6px;line-height:8.6px;color:#3b3b3b;font-weight:400;transform:scaleX(0.942);transform-origin:left center;">Preferred Disbursement Method</div>
<div class="r" style="left:767px;top:492.7px;width:297px;height:1px;background:#e8e4ea;"></div>
<div class="r" style="left:609px;top:507.8px;width:465px;height:94.8px;background:#fbf7fc;border-radius:5px;"></div>
<div class="t" style="left:619px;top:519.89px;font-size:8.75px;line-height:8.75px;color:#1f1f1f;font-weight:700;">Payment Instructions</div>
<div class="r" style="left:618.5px;top:534px;width:445.5px;height:19.5px;background:#fbf7fb;border:1px solid #f3eff4;"></div>
<div class="r" style="left:633px;top:534px;width:1px;height:19.5px;background:#f3eff4;"></div>
<div class="r" style="left:823px;top:534px;width:1px;height:19.5px;background:#f3eff4;"></div>
<div class="r" style="left:1030px;top:534px;width:1px;height:19.5px;background:#f3eff4;"></div>
<svg class="r" style="left:621.5px;top:539.5px;" width="9" height="9" viewBox="0 0 9 9"><g fill="none" stroke="#777" stroke-width="0.9"><circle cx="4.5" cy="4.5" r="1.4"/><circle cx="4.5" cy="4.5" r="3.4" stroke-dasharray="1.3 0.8" stroke-width="1.6"/></g></svg>
<div class="t" style="left:636px;top:540.07px;font-size:7px;line-height:7px;color:#8a8a8a;font-weight:700;">Description</div>
<div class="t" style="left:825.6px;top:540.07px;font-size:7px;line-height:7px;color:#8a8a8a;font-weight:700;">Value</div>
<div class="r" style="left:618.5px;top:553.5px;width:445.5px;height:41.7px;background:#ffffff;"></div>
<svg class="r" style="left:707px;top:353px;" width="18" height="26" viewBox="0 0 18 26"><path d="M1.2 1.2 L1.2 19.2 L5.6 15.4 L8.8 22.8 L12.2 21.3 L9.1 14.2 L15.2 14.2 Z" fill="#fff" stroke="#151515" stroke-width="1.5" stroke-linejoin="round"/></svg>
<div class="r" style="left:0px;top:0px;width:1116px;height:2px;background:#175b7c;"></div>
<div class="r" style="left:0px;top:0px;width:2px;height:628px;background:#175b7c;"></div>
<div class="r" style="left:1114px;top:0px;width:2px;height:628px;background:#175b7c;"></div>
<div class="r" style="left:0px;top:625px;width:1116px;height:3px;background:#175b7c;"></div>
</body></html>
